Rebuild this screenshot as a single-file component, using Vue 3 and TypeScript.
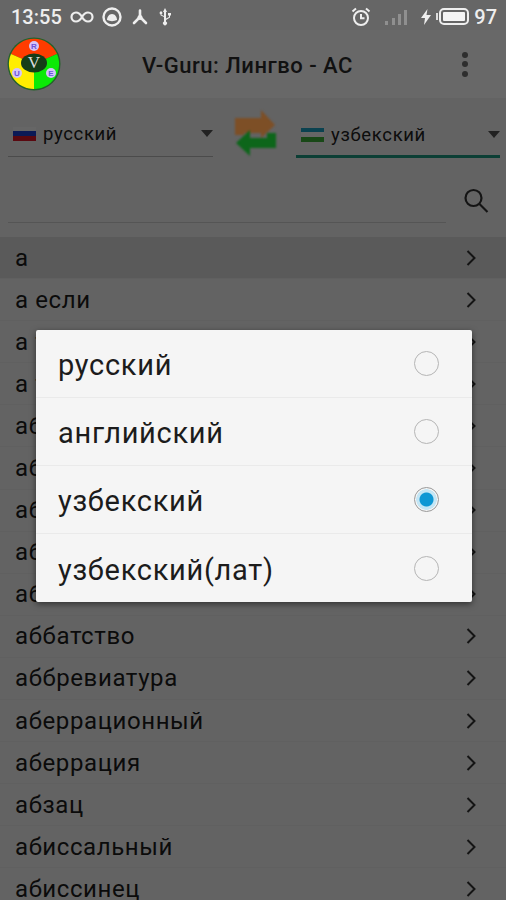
<template>
  <div class="screen">
    <div class="status">
      <div class="status-side">
        <span class="clock">13:55</span>
        <svg width="26" height="14" viewBox="0 0 26 14" fill="none" stroke="#eee" stroke-width="2.2"><path d="M13 7C11 3.5 9.5 2.5 7 2.5a4.5 4.5 0 0 0 0 9c2.500 0 4-1 6-4.500s3.500-4.500 6-4.500a4.500 4.500 0 0 1 0 9c-2.500 0-4-1-6-4.500z" /></svg>
        <svg width="20" height="20" viewBox="0 0 20 20"><circle cx="10" cy="10" r="8.500" fill="none" stroke="#eee" stroke-width="2.400" /><path d="M5 13c0-3 2-6 5-6s5 3 5 6c-3 1.500-7 1.500-10 0z" fill="#eee" /></svg>
        <svg class="nodes" width="18" height="18" viewBox="0 0 18 18" fill="none" stroke="#eee" stroke-width="2.600" stroke-linecap="round"><path d="M9 2.500V9M9 9l-6 6M9 9l6 6" /><circle cx="9" cy="9.500" r="2.500" fill="#eee" stroke="none" /></svg>
        <svg class="usb" width="14" height="20" viewBox="0 0 14 20" fill="#eee"><path d="M6 5H5l2-4 2 4H8v9.500a2 2 0 1 1-2 0z" /><path d="M8 11.500l3-1.500V8.500H10V6h3v2.500h-1v2L8 13zM6 10L2.500 8.300V7.200a1.400 1.400 0 1 1 1 0v.6L6 9z" /></svg>
      </div>
      <div class="status-side">
        <svg width="20" height="20" viewBox="0 0 20 20" fill="none" stroke="#eee" stroke-width="2"><circle cx="10" cy="11" r="7" /><path d="M10 7v4.300h3.500M1.500 4.500L5 1.500M18.500 4.500L15 1.500" /></svg>
        <svg class="signal" width="24" height="18" viewBox="0 0 24 18" fill="#8f8f8f"><rect x="1" y="13" width="3" height="4" /><rect x="8" y="10" width="3" height="7" /><rect x="14" y="6" width="3" height="11" /><rect x="20" y="2" width="3" height="15" /></svg>
        <svg width="10" height="16" viewBox="0 0 10 16" fill="#eee"><path d="M6.500 0L0 9h4l-1 7 7-10H5.500z" /></svg>
        <div class="battery"><div class="battery-fill"></div></div>
        <span class="level">97</span>
      </div>
    </div>

    <header class="appbar">
      <svg class="logo" width="54" height="54" viewBox="0 0 54 54">
        <circle cx="27" cy="27" r="26.500" fill="#24622a" />
        <path d="M27 27L4 17A25 25 0 0 1 50 17z" fill="#ff3c00" />
        <path d="M27 27L50 17A25 25 0 0 1 27 52z" fill="#0bea06" />
        <path d="M27 27L27 52A25 25 0 0 1 4 17z" fill="#ffee00" />
        <ellipse cx="27" cy="26" rx="13" ry="9.500" fill="#153d18" />
        <circle cx="27" cy="9" r="5" fill="#d5c4f8" />
        <circle cx="10" cy="36" r="5" fill="#d5c4f8" />
        <circle cx="44" cy="36" r="5" fill="#d5c4f8" />
        <text x="27" y="12" class="logo-letter">R</text>
        <text x="10" y="39" class="logo-letter">U</text>
        <text x="44" y="39" class="logo-letter">E</text>
        <text x="27" y="31" class="logo-v">V</text>
      </svg>
      <h1 class="title">V-Guru: Лингво - АС</h1>
      <div class="more"><i></i><i></i><i></i></div>
    </header>

    <main class="content">
      <div class="selectors">
        <div class="select">
          <span class="flag flag-ru"><i></i><i></i><i></i></span>
          <span class="select-label">русский</span>
          <span class="arrow"></span>
        </div>
        <svg class="swap" width="46" height="50" viewBox="0 0 46 50">
          <path d="M3 27V10H29V2L43 17 29 30V25H12v2z" fill="#7d4f26" />
          <path d="M44 25V40H18V48L4 35 18 22v8H35V25z" fill="#0d661a" />
        </svg>
        <div class="select select-active">
          <span class="flag flag-uz"><i></i><i></i><i></i></span>
          <span class="select-label">узбекский</span>
          <span class="arrow"></span>
        </div>
      </div>

      <div class="search">
        <div class="search-field"></div>
        <svg class="search-icon" width="28" height="28" viewBox="0 0 28 28" fill="none" stroke="#333" stroke-width="2.200"><circle cx="11.500" cy="11" r="8" /><path d="M17.500 17l8 8" /></svg>
      </div>

      <ul class="words">
        <li v-for="(word, i) in words" :key="word" class="word" :class="{ current: i === 0 }">
          <span>{{ word }}</span>
          <svg width="10" height="16" viewBox="0 0 10 16" fill="none" stroke="#333" stroke-width="2"><path d="M1.500 1l7 7-7 7" /></svg>
        </li>
      </ul>
    </main>

    <div class="scrim">
      <div class="dialog">
        <div v-for="lang in languages" :key="lang" class="option">
          <span class="option-label">{{ lang }}</span>
          <span class="radio" :class="{ checked: lang === selected }"></span>
        </div>
      </div>
    </div>
  </div>
</template>

<script setup lang="ts">
const selected = 'узбекский'
const languages: string[] = ['русский', 'английский', 'узбекский', 'узбекский(лат)']
const words: string[] = [
  'а', 'а если', 'а также', 'а то', 'абажур', 'абазин', 'аббат', 'аббатиса', 'аббатский',
  'аббатство', 'аббревиатура', 'аберрационный', 'аберрация', 'абзац', 'абиссальный', 'абиссинец',
]
</script>

<style>
html, body { margin: 0; background: #636363; }
</style>

<style scoped>
.screen {
  position: relative;
  width: 506px;
  height: 900px;
  overflow: hidden;
  font-family: Roboto, "Noto Sans", sans-serif;
  background: #666;
}
.status {
  height: 30px;
  display: flex;
  justify-content: space-between;
  align-items: center;
  padding: 3px 9px 0 11px;
  box-sizing: border-box;
  color: #eee;
}
.status-side { display: flex; align-items: center; gap: 7px; }
.status-side:last-child { gap: 8px; }
.clock, .level { font-size: 20px; font-weight: 500; }
.nodes { margin-left: 2px; }
.usb { margin-left: 2px; }
.signal { margin: 0 5px; }
.battery {
  position: relative;
  width: 30px;
  height: 17px;
  border: 2px solid #eee;
  border-radius: 5px;
  padding: 2px;
  box-sizing: border-box;
  margin-right: -3px;
}
.battery::before {
  content: "";
  position: absolute;
  left: -5px;
  top: 3px;
  width: 2px;
  height: 7px;
  background: #ddd;
}
.battery-fill { height: 100%; background: #f4f4f4; border-radius: 1px; }
.appbar {
  position: relative;
  z-index: 2;
  height: 68px;
  display: flex;
  align-items: center;
  padding: 0 38px 0 7px;
  background: #686868;
}
.logo { flex: none; }
.logo-letter { font: 700 8px "Liberation Sans", sans-serif; fill: #6a55d8; text-anchor: middle; }
.logo-v { font: 400 17px "Liberation Serif", serif; fill: #ddd; text-anchor: middle; }
.title {
  flex: 1;
  margin: 2px 0 0 81px;
  font-size: 22px;
  font-weight: 500;
  letter-spacing: .5px;
  white-space: nowrap;
  color: #111;
}
.more { display: flex; flex-direction: column; gap: 3.5px; }
.more i { width: 6px; height: 6px; border-radius: 50%; background: #2e2e2e; }
.content { background: #f8f8f8; height: 803px; }
.selectors {
  height: 59px;
  display: flex;
  align-items: flex-end;
  padding: 0 6px 0 8px;
  justify-content: space-between;
}
.select {
  width: 205px;
  height: 40px;
  display: flex;
  align-items: center;
  padding: 0 0 6px 5px;
  box-sizing: border-box;
  border-bottom: 1px solid #bbb;
  font-size: 18.500px;
  color: #222;
}
.select-active { width: 204px; border-bottom: 3px solid #1f9f84; padding-bottom: 4px; margin-bottom: -1px; }
.select-label { flex: 1; margin-left: 7px; letter-spacing: .65px; }
.flag { width: 23px; height: 14px; display: flex; flex-direction: column; }
.flag i { flex: 1; }
.flag-ru i:nth-child(1) { background: #fff; }
.flag-ru i:nth-child(2) { background: #1c43d8; }
.flag-ru i:nth-child(3) { background: #e0182a; }
.flag-uz i:nth-child(1) { background: #1ca5c9; }
.flag-uz i:nth-child(2) { background: #fff; }
.flag-uz i:nth-child(3) { background: #40b53a; }
.arrow {
  width: 0;
  height: 0;
  border: 6.500px solid transparent;
  border-top: 7px solid #555;
  border-bottom: 0;
}
.swap { position: relative; z-index: 2; flex: none; margin-bottom: -1px; filter: blur(1px); }
.search {
  height: 66px;
  display: flex;
  gap: 16px;
  padding: 0 16px 0 8px;
}
.search-field { flex: 1; height: 100%; border-bottom: 1px solid #d5d5d5; box-sizing: border-box; }
.search-icon { align-self: flex-end; margin-bottom: 8px; }
.words { list-style: none; margin: 14px 0 0; padding: 0; }
.word {
  height: 42.100px;
  display: flex;
  justify-content: space-between;
  align-items: center;
  padding: 0 30px 0 15px;
  box-sizing: border-box;
  border-bottom: 1px solid #f0f0f0;
  font-size: 24px;
  letter-spacing: .6px;
  color: #1c1c1c;
}
.word.current { background: #e0e0e0; }
.scrim {
  position: absolute;
  top: 98px;
  left: 0;
  right: 0;
  bottom: 0;
  z-index: 1;
  background: rgba(0, 0, 0, .6);
}
.dialog {
  position: absolute;
  top: 232px;
  left: 36px;
  width: 436px;
  border-radius: 2px;
  background: #f5f5f5;
  box-shadow: 0 2px 6px rgba(0, 0, 0, .5);
}
.option {
  height: 68px;
  display: flex;
  justify-content: space-between;
  align-items: center;
  padding: 0 33px 0 22px;
  box-sizing: border-box;
  border-bottom: 1px solid #eaeaea;
  font-size: 29px;
  letter-spacing: .7px;
  color: #1c1c1c;
}
.option:last-child { border-bottom: 0; }
.option-label { padding-top: 3px; }
.radio {
  width: 25px;
  height: 25px;
  border: 1.500px solid #b5b5b5;
  border-radius: 50%;
  box-sizing: border-box;
}
.radio.checked {
  border-color: #999;
  background: radial-gradient(circle, #0d97d4 0 6.500px, #c4e6f5 7.500px 10px, #f5f5f5 10.500px);
}
</style>
